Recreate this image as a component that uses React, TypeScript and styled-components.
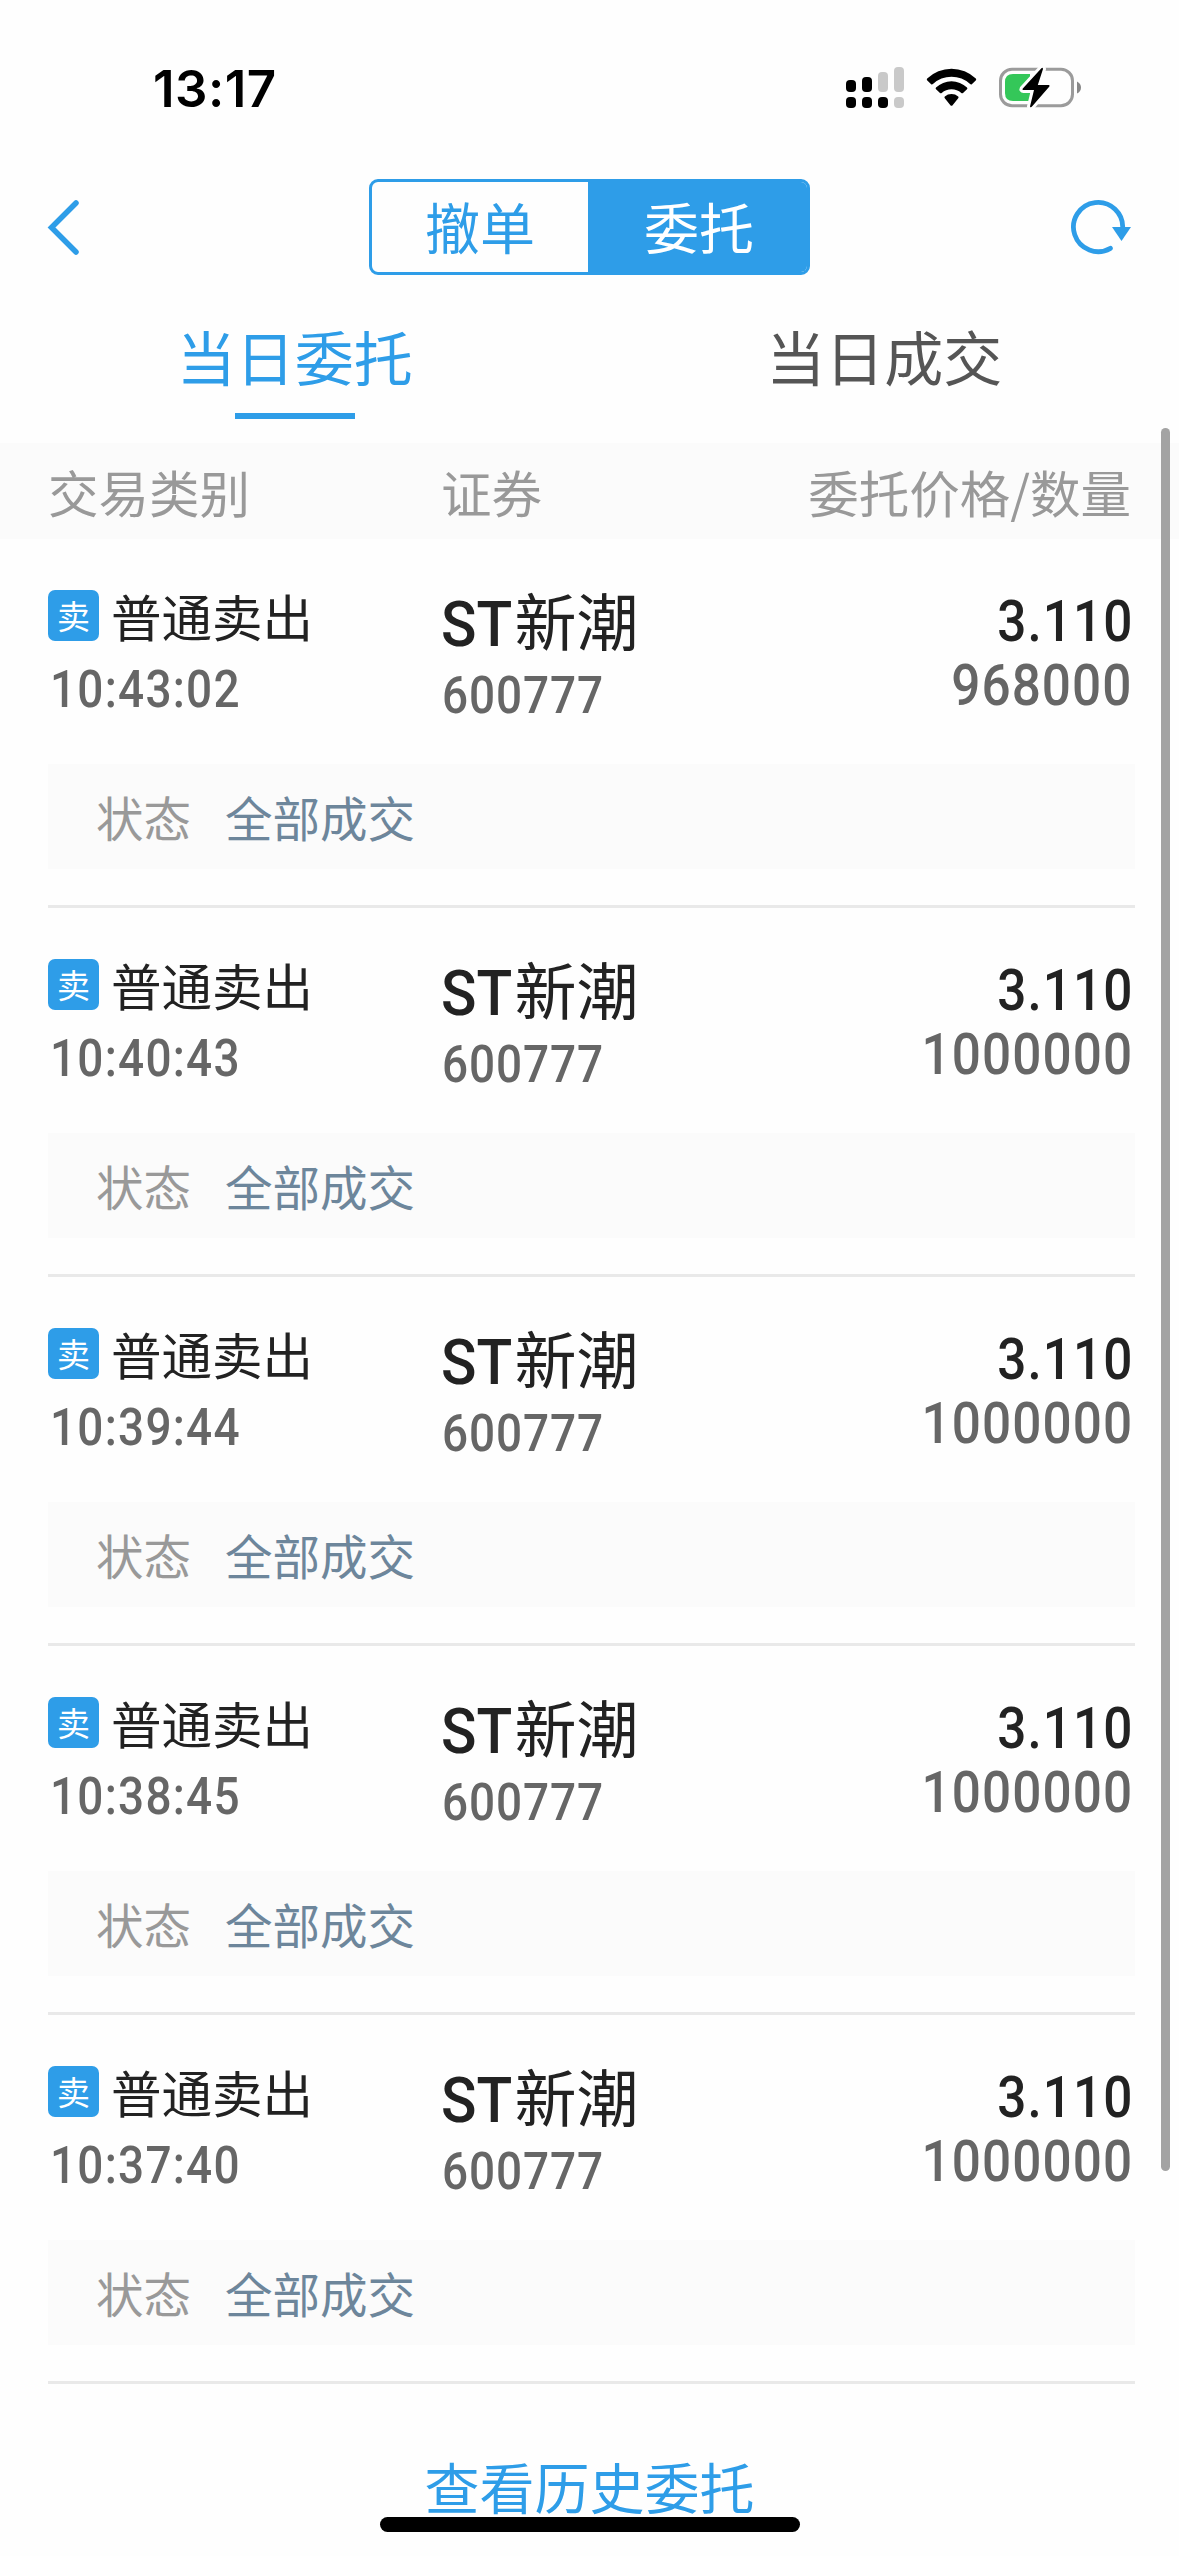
import React, { useState } from 'react';
import styled, { createGlobalStyle } from 'styled-components';

const BLUE = '#2e9de8';
const CJK = "'Noto Sans CJK SC', sans-serif";
const DIGITS = "Roboto, 'Noto Sans CJK SC', sans-serif";

const GlobalStyle = createGlobalStyle`
  * { box-sizing: border-box; }
  body { margin: 0; background: #fefefe; }
  button { border: 0; padding: 0; margin: 0; background: none; color: inherit; font: inherit; display: block; }
`;

const Screen = styled.div`
  position: relative;
  width: 1179px;
  height: 2556px;
  overflow: hidden;
  background: #fefefe;
  font-family: ${CJK};
  font-weight: 400;
  display: flex;
  flex-direction: column;
`;

const StatusBar = styled.header`
  height: 179px;
  padding: 56px 96px 0 153px;
  display: flex;
  justify-content: space-between;
  align-items: flex-start;
`;

const Clock = styled.time`
  font: 600 51px/65px Inter, sans-serif;
  letter-spacing: 0.5px;
  color: #000;
`;

const StatusIcons = styled.svg`
  display: block;
  width: 240px;
  height: 60px;
  margin-top: 4px;
`;

const NavBar = styled.nav`
  height: 96px;
  padding: 0 46px;
  display: flex;
  justify-content: space-between;
  align-items: center;
`;

const IconButton = styled.button`
  width: 66px;
  height: 66px;
  svg { display: block; }
`;

const Segmented = styled.div`
  width: 441px;
  height: 96px;
  border: 3px solid ${BLUE};
  border-radius: 9px;
  overflow: hidden;
  display: grid;
  grid-template-columns: 216px 1fr;
`;

const Segment = styled.button<{ $active?: boolean }>`
  background: ${(p) => (p.$active ? BLUE : 'transparent')};
  color: ${(p) => (p.$active ? '#fff' : BLUE)};
  height: 90px;
  padding: 0 0 4px ${(p) => (p.$active ? 3 : 0)}px;
  font-size: 55px;
  line-height: 86px;
  text-align: center;
`;

const Tabs = styled.div`
  height: 168px;
  display: grid;
  grid-template-columns: 1fr 1fr;
`;

const Tab = styled.button<{ $active?: boolean }>`
  display: flex;
  flex-direction: column;
  align-items: center;
  padding-top: 39px;
  color: ${(p) => (p.$active ? BLUE : '#555')};
  font-size: 59px;
  line-height: 84px;

  &::after {
    content: '';
    width: 120px;
    height: 6px;
    margin-top: 15px;
    background: ${(p) => (p.$active ? BLUE : 'transparent')};
  }
`;

const TableHead = styled.div`
  height: 96px;
  padding: 0 48px;
  background: #fbfbfb;
  color: #999;
  font-size: 50.5px;
  line-height: 97px;
  display: grid;
  grid-template-columns: 393px 1fr auto;
`;

const Orders = styled.main`
  padding: 0 44px 0 48px;
`;

const Order = styled.article`
  height: 369px;
  border-bottom: 3px solid #e9e9e9;
  padding-top: 40px;
`;

const OrderInfo = styled.div`
  height: 185px;
  padding-right: 3px;
  display: grid;
  grid-template-columns: 393px 1fr auto;
`;

const Kind = styled.div`
  display: flex;
  align-items: center;
  gap: 12px;
  height: 72px;
  color: #222;
  font-size: 50.5px;
  line-height: 72px;
`;

const Badge = styled.span`
  width: 51px;
  height: 51px;
  border-radius: 7px;
  background: ${BLUE};
  color: #fff;
  font-size: 33px;
  line-height: 51px;
  text-align: center;
`;

const SmallDigits = styled.div<{ $top: number; $left?: number; $spacing?: number }>`
  margin: ${(p) => p.$top}px 0 0 ${(p) => p.$left ?? 1}px;
  color: #666;
  font: 500 51px/60px ${DIGITS};
  letter-spacing: ${(p) => p.$spacing ?? 1.4}px;
  transform: scaleX(0.9);
  transform-origin: left;
`;

const StockName = styled.div`
  color: #222;
  font-family: ${CJK};
  font-size: 62px;
  line-height: 80px;
  height: 80px;
`;

const Latin = styled.span`
  display: inline-block;
  margin-right: -3px;
  font-family: ${DIGITS};
  font-weight: 500;
  font-size: 63px;
  line-height: 80px;
  transform: scaleX(0.93);
  transform-origin: left;
`;

const Amounts = styled.div`
  display: flex;
  flex-direction: column;
  align-items: flex-end;
  padding-top: 11px;
`;

const Amount = styled.div<{ $muted?: boolean }>`
  color: ${(p) => (p.$muted ? '#666' : '#222')};
  font: 500 57px/64px ${DIGITS};
  letter-spacing: 1.2px;
  margin-right: -1px;
  transform: scaleX(0.9);
  transform-origin: right;
`;

const State = styled.div`
  height: 105px;
  padding-left: 48px;
  background: #fbfbfb;
  color: #999;
  font-size: 47.5px;
  line-height: 105px;
  display: flex;
  gap: 34px;
`;

const StateValue = styled.span`
  color: #6d869b;
`;

const HistoryLink = styled.button`
  align-self: center;
  margin-top: 61px;
  color: ${BLUE};
  font-size: 55px;
  line-height: 80px;
`;

const ScrollThumb = styled.div`
  position: absolute;
  top: 428px;
  right: 9px;
  width: 9px;
  height: 1743px;
  border-radius: 5px;
  background: #a3a3a3;
`;

const HomeIndicator = styled.div`
  position: absolute;
  left: 380px;
  bottom: 24px;
  width: 420px;
  height: 15px;
  border-radius: 8px;
  background: #000;
`;

const orders = [
  { time: '10:43:02', qty: '968000' },
  { time: '10:40:43', qty: '1000000' },
  { time: '10:39:44', qty: '1000000' },
  { time: '10:38:45', qty: '1000000' },
  { time: '10:37:40', qty: '1000000' },
];

function DeviceIcons() {
  return (
    <StatusIcons viewBox="843 60 240 60">
      <rect x="846" y="80" width="10" height="12" rx="4" />
      <rect x="862" y="77" width="10" height="15" rx="4" />
      <rect x="878" y="72" width="10" height="20" rx="4" fill="#c9c9c9" />
      <rect x="894" y="67" width="10" height="25" rx="4" fill="#c9c9c9" />
      <rect x="846" y="97" width="10" height="11" rx="4" />
      <rect x="862" y="97" width="10" height="11" rx="4" />
      <rect x="878" y="97" width="10" height="11" rx="4" />
      <rect x="894" y="97" width="10" height="11" rx="4" fill="#c9c9c9" />
      <path d="M927.2 78.6Q926.4 79.6 927.3 80.5L931.2 84.2Q932 84.9 932.9 84.1A27 27 0 0 1 970.1 84.1Q971 84.9 971.8 84.2L975.7 80.5Q976.6 79.6 975.8 78.6A35 35 0 0 0 927.2 78.6Z" />
      <path d="M936 87.5Q935.2 88.4 936 89.3L940 93Q940.8 93.7 941.7 93A15 15 0 0 1 961.3 93Q962.2 93.7 963 93L967 89.3Q967.8 88.4 967 87.5A22.5 22.5 0 0 0 936 87.5Z" />
      <path d="M944.8 96.5Q944 97.4 944.8 98.2L950.4 105.2Q951.5 106.5 952.6 105.2L958.2 98.2Q959 97.4 958.2 96.5A10.5 10.5 0 0 0 944.8 96.5Z" />
      <rect x="1000.5" y="69.2" width="72" height="36.5" rx="11.5" fill="none" stroke="#9b9b9b" strokeWidth="3" />
      <path d="M1077 81.5Q1081 83.5 1081 87.5T1077 93.5Z" fill="#888" />
      <path d="M1013 74H1030V101H1013Q1005 101 1005 93V82Q1005 74 1013 74Z" fill="#34c759" />
      <path d="M1041.4 68.2 1022.6 88.8Q1022 90 1023.4 90H1034L1030 106.4Q1030.6 108 1032 106.6L1049.4 86.4Q1050 85 1048.5 85H1037.8L1043 69Q1042.7 67 1041.4 68.2Z" stroke="#fefefe" strokeWidth="6" strokeLinejoin="round" />
      <path d="M1041.4 68.2 1022.6 88.8Q1022 90 1023.4 90H1034L1030 106.4Q1030.6 108 1032 106.6L1049.4 86.4Q1050 85 1048.5 85H1037.8L1043 69Q1042.7 67 1041.4 68.2Z" />
    </StatusIcons>
  );
}

function BackIcon() {
  return (
    <svg width="66" height="66" viewBox="46 194 66 66" fill="none" stroke={BLUE} strokeWidth="5.5" strokeLinecap="round" strokeLinejoin="miter">
      <path d="M76 203 51.5 227.5 76 252" />
    </svg>
  );
}

function RefreshIcon() {
  return (
    <svg width="66" height="66" viewBox="1067 194 66 66" fill="none">
      <path d="M1110.4 248.3A24.6 24.6 0 1 1 1122.6 229" stroke={BLUE} strokeWidth="4.8" strokeLinecap="round" />
      <path d="M1112 227H1131L1121.5 241Z" fill={BLUE} />
    </svg>
  );
}

export default function App() {
  const [segment, setSegment] = useState(1);
  const [tab, setTab] = useState(0);
  return (
    <>
      <GlobalStyle />
      <Screen>
        <StatusBar>
          <Clock>13:17</Clock>
          <DeviceIcons />
        </StatusBar>
        <NavBar>
          <IconButton aria-label="返回"><BackIcon /></IconButton>
          <Segmented>
            {['撤单', '委托'].map((label, i) => (
              <Segment key={label} $active={segment === i} onClick={() => setSegment(i)}>{label}</Segment>
            ))}
          </Segmented>
          <IconButton aria-label="刷新"><RefreshIcon /></IconButton>
        </NavBar>
        <Tabs>
          {['当日委托', '当日成交'].map((label, i) => (
            <Tab key={label} $active={tab === i} onClick={() => setTab(i)}>{label}</Tab>
          ))}
        </Tabs>
        <TableHead>
          <span>交易类别</span>
          <span>证券</span>
          <span>委托价格/数量</span>
        </TableHead>
        <Orders>
          {orders.map((o) => (
            <Order key={o.time}>
              <OrderInfo>
                <div>
                  <Kind><Badge>卖</Badge>普通卖出</Kind>
                  <SmallDigits $top={9} $left={2}>{o.time}</SmallDigits>
                </div>
                <div>
                  <StockName><Latin>ST</Latin>新潮</StockName>
                  <SmallDigits $top={7} $spacing={1}>600777</SmallDigits>
                </div>
                <Amounts>
                  <Amount>3.110</Amount>
                  <Amount $muted>{o.qty}</Amount>
                </Amounts>
              </OrderInfo>
              <State>
                <span>状态</span>
                <StateValue>全部成交</StateValue>
              </State>
            </Order>
          ))}
        </Orders>
        <HistoryLink>查看历史委托</HistoryLink>
        <ScrollThumb />
        <HomeIndicator />
      </Screen>
    </>
  );
}
